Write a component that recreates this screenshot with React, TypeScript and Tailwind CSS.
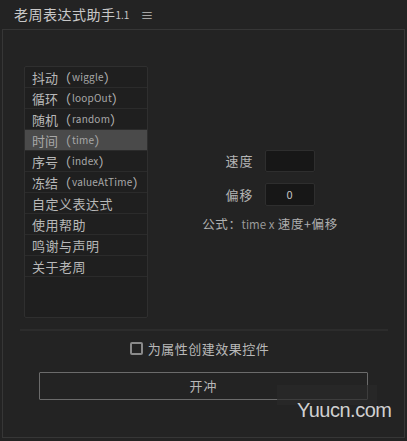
import React from "react";

const items: { zh: string; en?: string }[] = [
  { zh: "抖动", en: "wiggle" },
  { zh: "循环", en: "loopOut" },
  { zh: "随机", en: "random" },
  { zh: "时间", en: "time" },
  { zh: "序号", en: "index" },
  { zh: "冻结", en: "valueAtTime" },
  { zh: "自定义表达式" },
  { zh: "使用帮助" },
  { zh: "鸣谢与声明" },
  { zh: "关于老周" },
];

const font = { fontFamily: '"Noto Sans CJK SC", "Noto Sans", sans-serif' };

export default function App() {
  const [active, setActive] = React.useState(3);
  const [checked, setChecked] = React.useState(false);

  return (
    <div className="relative flex h-[441px] w-[407px] flex-col bg-[#232323] text-[#b4b4b4]" style={font}>
      <div className="flex h-[29px] shrink-0 items-center pl-[14px] text-[14px] tracking-[0.5px] text-[#c8c8c8]">
        <span>老周表达式助手</span>
        <span className="text-[10px] leading-none tracking-normal">1.1</span>
        <span className="ml-[11px] text-[13px] text-[#bdbdbd]">≡</span>
      </div>

      <div className="mx-[2px] mb-[3px] flex flex-1 flex-col border border-[#363636] bg-[#232323]">
        <div className="flex pl-[21px] pt-[36px]">
          <ul className="h-[252px] w-[124px] shrink-0 overflow-hidden rounded-[2px] border border-[#2f2f2f] bg-[#1f1f1f] text-[13px]">
            {items.map((t, i) => (
              <li
                key={t.zh}
                onClick={() => setActive(i)}
                className={`flex h-[21px] items-center whitespace-nowrap border-b border-[#2b2b2b] pl-[7px] leading-none ${
                  i === active ? "bg-[#4a4a4a] text-[#a8a8a8]" : "text-[#b8b8b8]"
                }`}
              >
                <span className={t.en ? "" : "tracking-[0.5px]"}>{t.zh}</span>
                {t.en && (
                  <>
                    <span>（</span>
                    <span className="pl-[1px] text-[10px] tracking-[0.2px] text-[#a8a8a8]">{t.en}</span>
                    <span>）</span>
                  </>
                )}
              </li>
            ))}
          </ul>

          <div className="flex w-[244px] flex-col items-center pt-[84px] text-[13px]">
            <div className="flex items-center gap-[11px] whitespace-nowrap">
              <span className="tracking-[1px] text-[#b4b4b4]">速度</span>
              <div className="h-[22px] w-[50px] rounded-[2px] border border-[#2e2e2e] bg-[#171717]" />
            </div>
            <div className="mt-[11px] flex items-center gap-[11px] whitespace-nowrap">
              <span className="tracking-[1px] text-[#b4b4b4]">偏移</span>
              <div className="flex h-[23px] w-[50px] items-center justify-center rounded-[2px] border border-[#2e2e2e] bg-[#171717] text-[11px] text-[#c4c4c4]">
                0
              </div>
            </div>
            <div className="mt-[9px] whitespace-nowrap text-[12.5px] tracking-[0.6px] text-[#b0b0b0]">
              公式：<span className="text-[11.5px] tracking-normal text-[#9a9a9a]">time x</span> 速度+偏移
            </div>
          </div>
        </div>

        <div className="ml-[17px] mt-[11px] h-[2px] w-[368px] bg-[#2c2c2c]" />

        <label className="mt-[8px] flex cursor-pointer items-center justify-center gap-[5px] pr-[8px] text-[13px] tracking-[0.5px] text-[#b8b8b8]">
          <span
            onClick={() => setChecked(!checked)}
            className="flex h-[13px] w-[13px] items-center justify-center rounded-[2px] border-2 border-[#8a8a8a] bg-[#232323] text-[9px] leading-none"
          >
            {checked ? "✓" : ""}
          </span>
          为属性创建效果控件
        </label>

        <button className="ml-[36px] mt-[13px] h-[28px] w-[329px] rounded-[1px] border border-[#6b6b6b] bg-[#232323] text-[13px] tracking-[1px] text-[#b8b8b8]">
          开冲
        </button>
      </div>

      <div className="pointer-events-none absolute left-[277px] top-[385px] h-[20px] w-[100px] bg-[#2a2a2a]/70" />
      <div
        className="pointer-events-none absolute left-[297px] top-[400px] text-[20px] leading-none tracking-[-0.5px] text-[#d0d0d0]"
        style={{ fontFamily: '"Liberation Sans", Arial, sans-serif' }}
      >
        Yuucn.com
      </div>
    </div>
  );
}
